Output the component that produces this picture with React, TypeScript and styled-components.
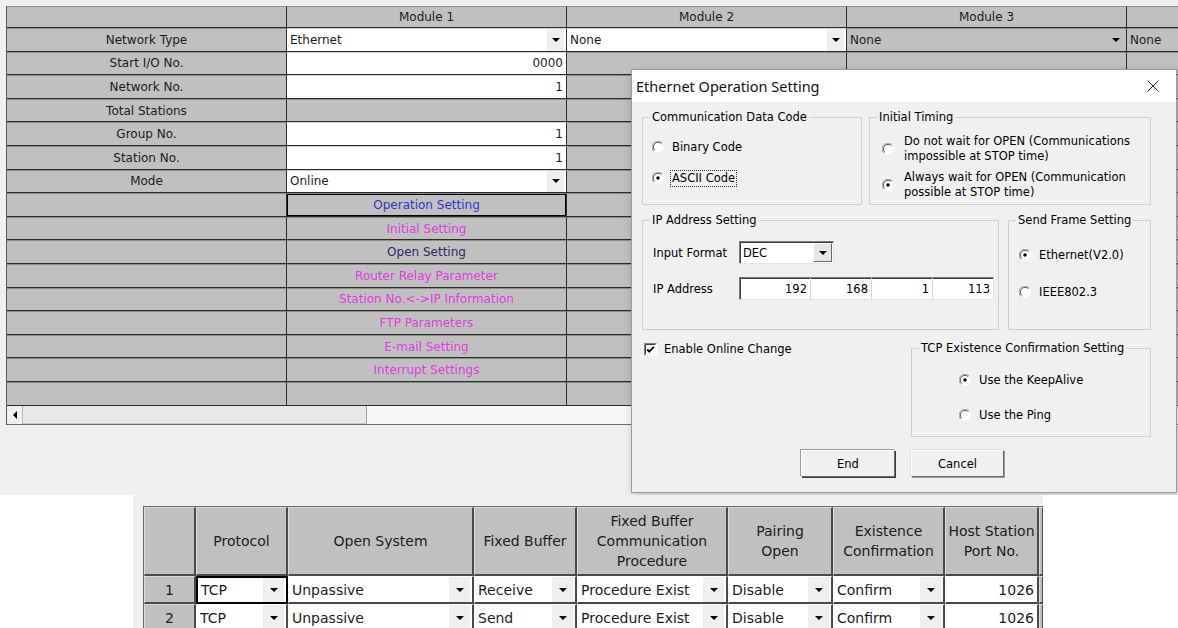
import React from "react";
import styled, { createGlobalStyle, css } from "styled-components";

const GlobalStyle = createGlobalStyle`
  html, body {
    margin: 0;
    padding: 0;
    background: #ffffff;
  }
  body {
    width: 1178px;
    height: 628px;
    overflow: hidden;
    font-family: "DejaVu Sans", "Liberation Sans", sans-serif;
  }
`;

type Tone = "gray" | "white";
type Align = "left" | "center" | "right";

const justify = (a: Align) =>
  a === "right" ? "flex-end" : a === "center" ? "center" : "flex-start";

const Page = styled.div`
  width: 1178px;
  height: 628px;
  display: flex;
  flex-direction: column;
  overflow: hidden;
`;

/* ---------- upper window: module parameter grid ---------- */

const Workspace = styled.div`
  position: relative;
  flex: none;
  height: 495px;
  padding: 6px 0 0 6px;
  box-sizing: border-box;
  background: #f0f0f0;
  overflow: hidden;
`;

const GridFrame = styled.div`
  display: flex;
  flex-direction: column;
  width: max-content;
  border-left: 1px solid #5a5a5a;
`;

const ParamGrid = styled.div`
  display: grid;
  grid-template-columns: repeat(5, 280px);
  grid-template-rows: 22px repeat(16, 23.6px);
  font-size: 12px;
  color: #1c1c1c;
`;

const GridCell = styled.div<{ $tone: Tone; $align: Align; $ink?: string; $focus?: boolean }>`
  box-sizing: border-box;
  display: flex;
  align-items: center;
  justify-content: ${({ $align }) => justify($align)};
  min-width: 0;
  padding: 0 3px;
  background: ${({ $tone }) => ($tone === "white" ? "#ffffff" : "#c0c0c0")};
  color: ${({ $ink }) => $ink ?? "#1c1c1c"};
  border-top: 1px solid ${({ $tone }) => ($tone === "white" ? "#d4d4d4" : "#8c8c8c")};
  border-bottom: 1px solid #2c2c2c;
  border-right: 1px solid #2c2c2c;
  white-space: nowrap;
  overflow: hidden;
  ${({ $focus }) =>
    $focus &&
    css`
      box-shadow: inset 0 0 0 1px #000;
    `}
`;

const CellText = styled.span`
  flex: 1;
  overflow: hidden;
`;

const ArrowZone = styled.span<{ $tone: Tone; $w: number }>`
  flex: none;
  width: ${({ $w }) => $w}px;
  align-self: stretch;
  display: flex;
  align-items: center;
  justify-content: center;
  background: ${({ $tone }) => ($tone === "white" ? "#efefef" : "#c0c0c0")};
`;

const DownTriangle = styled.span<{ $size: number }>`
  width: 0;
  height: 0;
  border-left: ${({ $size }) => $size}px solid transparent;
  border-right: ${({ $size }) => $size}px solid transparent;
  border-top: ${({ $size }) => $size}px solid #000;
`;

const LeftTriangle = styled.span`
  width: 0;
  height: 0;
  border-top: 4px solid transparent;
  border-bottom: 4px solid transparent;
  border-right: 4px solid #000;
`;

const HScroll = styled.div`
  display: flex;
  width: 1172px;
  height: 19px;
  box-sizing: border-box;
  background: #f7f7f7;
  border-bottom: 1px solid #6a6a6a;
`;

const ScrollButton = styled.div`
  width: 15px;
  display: flex;
  align-items: center;
  justify-content: center;
  background: #f0f0f0;
  border-right: 1px solid #b8b8b8;
`;

const ScrollThumb = styled.div`
  width: 343px;
  background: #e8e8e8;
  border-right: 1px solid #9c9c9c;
  border-bottom: 1px solid #c8c8c8;
`;

/* ---------- dialog ---------- */

const Dialog = styled.div`
  position: absolute;
  left: 631px;
  top: 69px;
  width: 546px;
  height: 424px;
  box-sizing: border-box;
  display: flex;
  flex-direction: column;
  background: #f0f0f0;
  border: 1px solid #9b9b9b;
  box-shadow: 2px 3px 10px rgba(0, 0, 0, 0.22);
  font-family: "DejaVu Sans", sans-serif;
  font-size: 11.5px;
  color: #000;
`;

const TitleBar = styled.div`
  flex: none;
  height: 32px;
  display: flex;
  align-items: center;
  justify-content: space-between;
  padding: 0 17px 0 4px;
  background: #ffffff;
  font-family: "Noto Sans", "Open Sans", sans-serif;
  font-size: 14.5px;
  color: #111;
`;

const DialogBody = styled.div`
  display: flex;
  flex-direction: column;
  padding: 8px 25px 0 10px;
`;

const BoxRow = styled.div<{ $h: number; $gap: number; $mt?: number }>`
  display: flex;
  gap: ${({ $gap }) => $gap}px;
  height: ${({ $h }) => $h}px;
  margin-top: ${({ $mt }) => $mt ?? 0}px;
`;

const GroupBox = styled.fieldset<{ $w: number }>`
  box-sizing: border-box;
  width: ${({ $w }) => $w}px;
  height: 100%;
  margin: 0;
  padding: 0;
  min-width: 0;
  border: 1px solid #cfcfcf;
`;

const GroupTitle = styled.legend`
  margin-left: 7px;
  padding: 0 2px;
  line-height: 14px;
`;

const GroupBody = styled.div<{ $pt: number; $pl: number; $gap: number }>`
  display: flex;
  flex-direction: column;
  gap: ${({ $gap }) => $gap}px;
  padding: ${({ $pt, $pl }) => `${$pt}px 0 0 ${$pl}px`};
`;

const Option = styled.label<{ $gap: number }>`
  display: flex;
  align-items: center;
  gap: ${({ $gap }) => $gap}px;
  min-height: 16px;
  line-height: 15px;
`;

const FocusText = styled.span`
  outline: 1px dotted #333;
  outline-offset: 0;
  padding: 0 1px;
  margin-left: -1px;
`;

const Glyph = styled.svg`
  flex: none;
  display: block;
`;

const FieldRow = styled.div`
  display: flex;
  align-items: center;
  height: 23px;
`;

const FieldLabel = styled.span`
  width: 86px;
  flex: none;
`;

const Sunken = styled.div<{ $w: number }>`
  box-sizing: border-box;
  display: flex;
  width: ${({ $w }) => $w}px;
  height: 23px;
  background: #fff;
  border-top: 1px solid #7a7a7a;
  border-left: 1px solid #7a7a7a;
  border-right: 1px solid #e4e4e4;
  border-bottom: 1px solid #e4e4e4;
  box-shadow: inset 1px 1px 0 #3c3c3c;
`;

const SelectValue = styled.span`
  flex: 1;
  display: flex;
  align-items: center;
  padding-left: 3px;
`;

const SelectButton = styled.span`
  flex: none;
  width: 17px;
  margin: 1px 1px 1px 0;
  display: flex;
  align-items: center;
  justify-content: center;
  background: #e6e6e6;
  border-top: 1px solid #fff;
  border-left: 1px solid #fff;
  border-right: 1px solid #6a6a6a;
  border-bottom: 1px solid #6a6a6a;
`;

const Octet = styled.span<{ $w: number }>`
  box-sizing: border-box;
  width: ${({ $w }) => $w}px;
  display: flex;
  align-items: center;
  justify-content: flex-end;
  padding-right: 3px;
  border-right: 1px solid #d8d8d8;
  &:last-child {
    border-right: none;
  }
`;

const CheckColumn = styled.div`
  flex: 1;
  padding: 0 0 0 2px;
`;

const ButtonRow = styled.div`
  display: flex;
  gap: 16px;
  margin-top: 13px;
  padding-left: 159px;
`;

const PushButton = styled.button<{ $w: number; $default?: boolean }>`
  box-sizing: border-box;
  width: ${({ $w }) => $w}px;
  height: 27px;
  padding: 0;
  font-family: "DejaVu Sans", sans-serif;
  font-size: 11.5px;
  color: #000;
  background: #f0f0f0;
  border-top: 1px solid #ffffff;
  border-left: 1px solid #ffffff;
  border-right: 1px solid #6a6a6a;
  border-bottom: 1px solid #6a6a6a;
  box-shadow: ${({ $default }) =>
    $default ? "1px 1px 0 #3a3a3a, -1px -1px 0 #9a9a9a" : "1px 1px 0 #9a9a9a, -1px -1px 0 #e0e0e0"};
`;

/* ---------- lower picture: open settings table ---------- */

const Footer = styled.div`
  flex: none;
  display: flex;
  height: 133px;
  background: #ffffff;
`;

const TablePanel = styled.div`
  width: 910px;
  margin-left: 133px;
  padding: 11px 0 0 10px;
  box-sizing: border-box;
  background: #f0f0f0;
  overflow: hidden;
`;

const ConnGrid = styled.div`
  display: grid;
  grid-template-columns: 52px 92px 186px 103px 151px 105px 112px 94px 5px;
  grid-template-rows: 69px 28px 28px;
  border-top: 1px solid #6a6a6a;
  border-left: 1px solid #6a6a6a;
  font-size: 14px;
  color: #1c1c1c;
`;

const ConnCell = styled.div<{ $tone: Tone; $align: Align; $focus?: boolean }>`
  box-sizing: border-box;
  display: flex;
  align-items: center;
  justify-content: ${({ $align }) => justify($align)};
  min-width: 0;
  padding: 0 ${({ $tone }) => ($tone === "gray" ? 0 : 3)}px;
  background: ${({ $tone }) => ($tone === "white" ? "#ffffff" : "#c0c0c0")};
  border-right: 2px solid #4a4a4a;
  border-bottom: 2px solid #4a4a4a;
  border-top: 1px solid ${({ $tone }) => ($tone === "white" ? "#ffffff" : "#dcdcdc")};
  border-left: 1px solid ${({ $tone }) => ($tone === "white" ? "#ffffff" : "#dcdcdc")};
  white-space: pre;
  text-align: center;
  line-height: 20px;
  overflow: hidden;
  ${({ $focus }) =>
    $focus &&
    css`
      border-top: 2px solid #000;
      border-left: 2px solid #000;
      border-right: 2px solid #000;
      border-bottom: 2px solid #000;
    `}
`;

/* ---------- small drawings ---------- */

const Radio = ({ checked }: { checked?: boolean }) => (
  <Glyph width="12" height="12" viewBox="0 0 12 12">
    <circle cx="6" cy="6" r="5.5" fill="#ffffff" />
    <path d="M10.2 1.8 A5.6 5.6 0 0 0 1.8 10.2" fill="none" stroke="#a0a0a0" strokeWidth="1" />
    <path d="M9.3 2.7 A4.5 4.5 0 0 0 2.7 9.3" fill="none" stroke="#505050" strokeWidth="1" />
    {checked && <circle cx="6" cy="6" r="1.7" fill="#000" />}
  </Glyph>
);

const CheckBox = () => (
  <Glyph width="13" height="13" viewBox="0 0 13 13">
    <rect x="0" y="0" width="13" height="13" fill="#ffffff" />
    <path d="M0.5 12.5 V0.5 H12.5" fill="none" stroke="#808080" strokeWidth="1" />
    <path d="M1.5 11.5 V1.5 H11.5" fill="none" stroke="#404040" strokeWidth="1" />
    <path d="M3.2 6.4 L5.3 8.6 L9.8 3.8" fill="none" stroke="#000" strokeWidth="1.8" />
  </Glyph>
);

const CloseGlyph = () => (
  <Glyph width="12" height="12" viewBox="0 0 12 12">
    <path d="M0.5 0.5 L11.5 11.5 M11.5 0.5 L0.5 11.5" stroke="#222" strokeWidth="1" />
  </Glyph>
);

/* ---------- data ---------- */

type Spec = {
  text?: string;
  tone?: Tone;
  align?: Align;
  ink?: string;
  select?: boolean;
  focus?: boolean;
};

const G: Spec = { tone: "gray" };
const PINK = "#e23ce2";

const paramRows: { label: string; cells: Spec[] }[] = [
  {
    label: "Network Type",
    cells: [
      { text: "Ethernet", tone: "white", select: true },
      { text: "None", tone: "white", select: true },
      { text: "None", select: true },
      { text: "None" },
    ],
  },
  { label: "Start I/O No.", cells: [{ text: "0000", tone: "white", align: "right" }, G, G, G] },
  { label: "Network No.", cells: [{ text: "1", tone: "white", align: "right" }, G, G, G] },
  { label: "Total Stations", cells: [G, G, G, G] },
  { label: "Group No.", cells: [{ text: "1", tone: "white", align: "right" }, G, G, G] },
  { label: "Station No.", cells: [{ text: "1", tone: "white", align: "right" }, G, G, G] },
  { label: "Mode", cells: [{ text: "Online", tone: "white", select: true }, G, G, G] },
  { label: "", cells: [{ text: "Operation Setting", align: "center", ink: "#3535c8", focus: true }, G, G, G] },
  { label: "", cells: [{ text: "Initial Setting", align: "center", ink: PINK }, G, G, G] },
  { label: "", cells: [{ text: "Open Setting", align: "center", ink: "#2a2a66" }, G, G, G] },
  { label: "", cells: [{ text: "Router Relay Parameter", align: "center", ink: PINK }, G, G, G] },
  { label: "", cells: [{ text: "Station No.<->IP Information", align: "center", ink: PINK }, G, G, G] },
  { label: "", cells: [{ text: "FTP Parameters", align: "center", ink: PINK }, G, G, G] },
  { label: "", cells: [{ text: "E-mail Setting", align: "center", ink: PINK }, G, G, G] },
  { label: "", cells: [{ text: "Interrupt Settings", align: "center", ink: PINK }, G, G, G] },
  { label: "", cells: [G, G, G, G] },
];

const connHeaders = [
  "",
  "Protocol",
  "Open System",
  "Fixed Buffer",
  "Fixed Buffer\nCommunication\nProcedure",
  "Pairing\nOpen",
  "Existence\nConfirmation",
  "Host Station\nPort No.",
  "",
];

const connRows = [
  ["1", "TCP", "Unpassive", "Receive", "Procedure Exist", "Disable", "Confirm", "1026"],
  ["2", "TCP", "Unpassive", "Send", "Procedure Exist", "Disable", "Confirm", "1026"],
];

/* ---------- parts ---------- */

const ParamCell = ({ spec }: { spec: Spec }) => {
  const tone = spec.tone ?? "gray";
  return (
    <GridCell
      $tone={tone}
      $align={spec.align ?? "left"}
      $ink={spec.ink}
      $focus={spec.focus}
      style={spec.select ? { paddingRight: 2 } : undefined}
    >
      {spec.select ? (
        <>
          <CellText>{spec.text}</CellText>
          <ArrowZone $tone={tone} $w={17}>
            <DownTriangle $size={4} />
          </ArrowZone>
        </>
      ) : (
        spec.text
      )}
    </GridCell>
  );
};

const ParameterGrid = () => (
  <GridFrame>
    <ParamGrid>
      <GridCell $tone="gray" $align="center" />
      {["Module 1", "Module 2", "Module 3", ""].map((m, i) => (
        <GridCell key={i} $tone="gray" $align="center">
          {m}
        </GridCell>
      ))}
      {paramRows.map((row, r) => (
        <React.Fragment key={r}>
          <GridCell $tone="gray" $align="center">
            {row.label}
          </GridCell>
          {row.cells.map((c, i) => (
            <ParamCell key={i} spec={c} />
          ))}
        </React.Fragment>
      ))}
    </ParamGrid>
    <HScroll>
      <ScrollButton>
        <LeftTriangle />
      </ScrollButton>
      <ScrollThumb />
    </HScroll>
  </GridFrame>
);

const EthernetDialog = () => (
  <Dialog>
    <TitleBar>
      <span>Ethernet Operation Setting</span>
      <CloseGlyph />
    </TitleBar>
    <DialogBody>
      <BoxRow $h={95} $gap={7}>
        <GroupBox $w={220}>
          <GroupTitle>Communication Data Code</GroupTitle>
          <GroupBody $pt={15} $pl={9} $gap={15}>
            <Option $gap={8}>
              <Radio />
              <span>Binary Code</span>
            </Option>
            <Option $gap={8}>
              <Radio checked />
              <FocusText>ASCII Code</FocusText>
            </Option>
          </GroupBody>
        </GroupBox>
        <GroupBox $w={282}>
          <GroupTitle>Initial Timing</GroupTitle>
          <GroupBody $pt={10} $pl={12} $gap={6}>
            <Option $gap={10}>
              <Radio />
              <span>
                Do not wait for OPEN (Communications
                <br />
                impossible at STOP time)
              </span>
            </Option>
            <Option $gap={10}>
              <Radio checked />
              <span>
                Always wait for OPEN (Communication
                <br />
                possible at STOP time)
              </span>
            </Option>
          </GroupBody>
        </GroupBox>
      </BoxRow>

      <BoxRow $h={117} $gap={9} $mt={8}>
        <GroupBox $w={357}>
          <GroupTitle>IP Address Setting</GroupTitle>
          <GroupBody $pt={14} $pl={10} $gap={13}>
            <FieldRow>
              <FieldLabel>Input Format</FieldLabel>
              <Sunken $w={95}>
                <SelectValue>DEC</SelectValue>
                <SelectButton>
                  <DownTriangle $size={4} />
                </SelectButton>
              </Sunken>
            </FieldRow>
            <FieldRow>
              <FieldLabel>IP Address</FieldLabel>
              <Sunken $w={255}>
                <Octet $w={71}>192</Octet>
                <Octet $w={61}>168</Octet>
                <Octet $w={61}>1</Octet>
                <Octet $w={60}>113</Octet>
              </Sunken>
            </FieldRow>
          </GroupBody>
        </GroupBox>
        <GroupBox $w={143}>
          <GroupTitle>Send Frame Setting</GroupTitle>
          <GroupBody $pt={20} $pl={10} $gap={21}>
            <Option $gap={8}>
              <Radio checked />
              <span>Ethernet(V2.0)</span>
            </Option>
            <Option $gap={8}>
              <Radio />
              <span>IEEE802.3</span>
            </Option>
          </GroupBody>
        </GroupBox>
      </BoxRow>

      <BoxRow $h={96} $gap={0} $mt={11}>
        <CheckColumn>
          <Option $gap={7}>
            <CheckBox />
            <span>Enable Online Change</span>
          </Option>
        </CheckColumn>
        <GroupBox $w={240}>
          <GroupTitle>TCP Existence Confirmation Setting</GroupTitle>
          <GroupBody $pt={17} $pl={47} $gap={19}>
            <Option $gap={8}>
              <Radio checked />
              <span>Use the KeepAlive</span>
            </Option>
            <Option $gap={8}>
              <Radio />
              <span>Use the Ping</span>
            </Option>
          </GroupBody>
        </GroupBox>
      </BoxRow>

      <ButtonRow>
        <PushButton $w={94} $default>
          End
        </PushButton>
        <PushButton $w={93}>Cancel</PushButton>
      </ButtonRow>
    </DialogBody>
  </Dialog>
);

const OpenSettingTable = () => (
  <TablePanel>
    <ConnGrid>
      {connHeaders.map((h, i) => (
        <ConnCell key={i} $tone="gray" $align="center">
          {h}
        </ConnCell>
      ))}
      {connRows.map((row, r) => (
        <React.Fragment key={r}>
          {row.map((v, i) => {
            if (i === 0)
              return (
                <ConnCell key={i} $tone="gray" $align="center">
                  {v}
                </ConnCell>
              );
            if (i === row.length - 1)
              return (
                <ConnCell key={i} $tone="white" $align="right">
                  {v}
                </ConnCell>
              );
            return (
              <ConnCell
                key={i}
                $tone="white"
                $align="left"
                $focus={r === 0 && i === 1}
                style={{ paddingRight: 2 }}
              >
                <CellText style={{ textAlign: "left" }}>{v}</CellText>
                <ArrowZone $tone="white" $w={21}>
                  <DownTriangle $size={4.5} />
                </ArrowZone>
              </ConnCell>
            );
          })}
          <ConnCell $tone="gray" $align="center" />
        </React.Fragment>
      ))}
    </ConnGrid>
  </TablePanel>
);

export default function App() {
  return (
    <Page>
      <GlobalStyle />
      <Workspace>
        <ParameterGrid />
        <EthernetDialog />
      </Workspace>
      <Footer>
        <OpenSettingTable />
      </Footer>
    </Page>
  );
}
